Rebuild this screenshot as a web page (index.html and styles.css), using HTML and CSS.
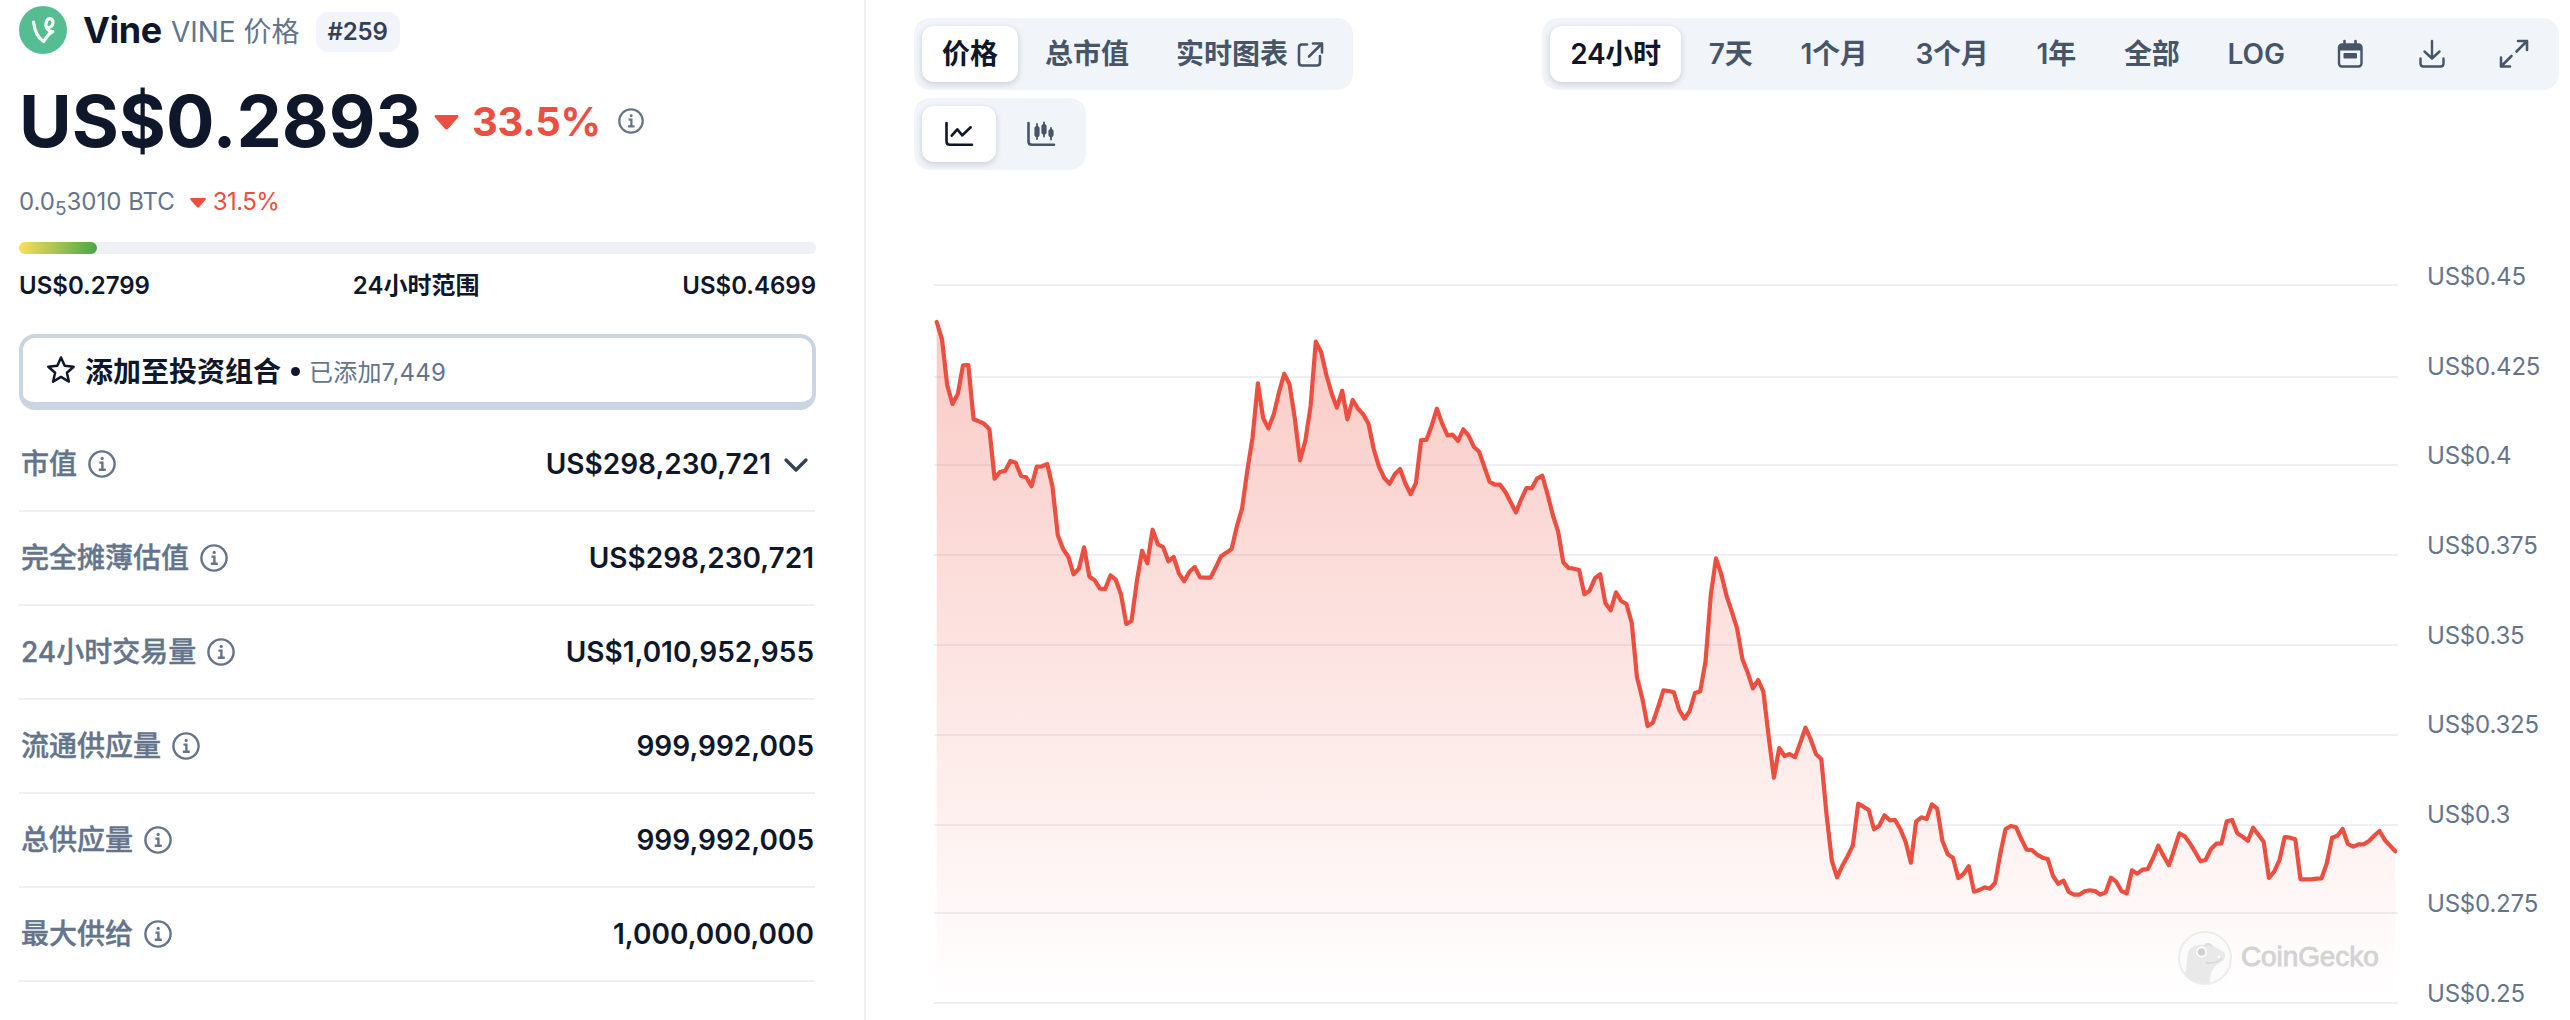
FILE: index.html
```html
<!DOCTYPE html>
<html lang="zh-CN">
<head>
<meta charset="utf-8">
<title>Vine VINE 价格</title>
<link rel="stylesheet" href="styles.css">
</head>
<body>
<svg class="defs" aria-hidden="true">
  <symbol id="info" viewBox="0 0 28 28"><circle cx="14" cy="14" r="12.6" fill="none" stroke="currentColor" stroke-width="2.4"/><circle cx="14.2" cy="8.4" r="1.6" fill="currentColor"/><path d="M11.4 12.6h3v7M10.8 19.8h7" fill="none" stroke="currentColor" stroke-width="2.4"/></symbol>
  <symbol id="down" viewBox="0 0 26 16"><path d="M2 0h22q3 0 1 3L15 14.500q-2 2-4 0L1 3q-2-3 1-3z" fill="currentColor"/></symbol>
</svg>
<div class="page">
  <aside class="side">
    <header class="coin">
      <svg class="logo" viewBox="0 0 48 48"><circle cx="24" cy="24" r="24" fill="#55bd92"/><path d="M14.500 16C15.500 24 19 32 24.500 35.500C28 32 28 28 34 25.500C29 25.500 25.500 21 27.500 15.500C29 11 34.500 12 34 17C33.500 20 31 21.500 29.500 21.500" fill="none" stroke="#f4fffc" stroke-width="3.200" stroke-linecap="round" stroke-linejoin="round"/></svg>
      <h1>Vine</h1>
      <span class="ticker">VINE 价格</span>
      <span class="rank">#259</span>
    </header>
    <div class="price">
      <span class="amount">US$0.2893</span>
      <svg class="tri-lg"><use href="#down"/></svg>
      <span class="change">33.5%</span>
      <svg class="info-sm"><use href="#info"/></svg>
    </div>
    <div class="btc">
      <span class="btc-amount">0.0<sub>5</sub>3010 BTC</span>
      <svg class="tri-sm"><use href="#down"/></svg>
      <span class="btc-change">31.5%</span>
    </div>
    <div class="range"><div class="range-fill"></div></div>
    <div class="range-labels"><span>US$0.2799</span><span>24小时范围</span><span>US$0.4699</span></div>
    <button class="portfolio">
      <svg class="star" viewBox="0 0 30 30"><path d="M15 2.500l3.700 8.300 9 .9-6.800 6 2 8.900-7.900-4.700-7.900 4.700 2-8.900-6.800-6 9-.9z" fill="none" stroke="currentColor" stroke-width="2.500" stroke-linejoin="round"/></svg>
      <b>添加至投资组合</b><i class="dot"></i><span>已添加7,449</span>
    </button>
    <dl class="stats">
      <div><dt>市值<svg><use href="#info"/></svg></dt><dd>US$298,230,721<svg class="chev" viewBox="0 0 32 28"><path d="M6 9l10 10 10-10" fill="none" stroke="currentColor" stroke-width="3.400" stroke-linecap="round" stroke-linejoin="round"/></svg></dd></div>
      <div><dt>完全摊薄估值<svg><use href="#info"/></svg></dt><dd>US$298,230,721</dd></div>
      <div><dt>24小时交易量<svg><use href="#info"/></svg></dt><dd>US$1,010,952,955</dd></div>
      <div><dt>流通供应量<svg><use href="#info"/></svg></dt><dd>999,992,005</dd></div>
      <div><dt>总供应量<svg><use href="#info"/></svg></dt><dd>999,992,005</dd></div>
      <div><dt>最大供给<svg><use href="#info"/></svg></dt><dd>1,000,000,000</dd></div>
    </dl>
  </aside>
  <main class="main">
    <div class="toolbar">
      <div class="toolbar-left">
        <div class="tabs metric">
          <button class="tab active">价格</button>
          <button class="tab">总市值</button>
          <button class="tab live">实时图表<svg class="icon" viewBox="0 0 28 28"><path d="M11 4.500H6Q3 4.500 3 7.500v15q0 3 3 3h15q3 0 3-3V16M17 3.500h9v9M26 3.500L13 16.500" fill="none" stroke="currentColor" stroke-width="2.600" stroke-linecap="round" stroke-linejoin="round"/></svg></button>
        </div>
        <div class="tabs">
          <button class="tab icon-tab active"><svg class="icon" viewBox="0 0 28 28"><path d="M1.500 3v18.500Q1.500 24.700 5 24.700h22M6.700 15.700l5.600-6.400 5 6L25.700 7.300" fill="none" stroke="currentColor" stroke-width="2.600" stroke-linecap="round" stroke-linejoin="round"/></svg></button>
          <button class="tab icon-tab"><svg class="icon" viewBox="0 0 28 28"><path d="M1.500 3v18.500Q1.500 24.700 5 24.700h22" fill="none" stroke="currentColor" stroke-width="2.600" stroke-linecap="round"/><path d="M10 4v15M17 2.500v14M24 8v11.500" fill="none" stroke="currentColor" stroke-width="1.800" stroke-linecap="round"/><path d="M10 8.500v6M17 6.500v5.500M24 11.500v3" fill="none" stroke="currentColor" stroke-width="5.200" stroke-linecap="round"/></svg></button>
        </div>
      </div>
      <div class="tabs period">
        <button class="tab active">24小时</button>
        <button class="tab">7天</button>
        <button class="tab">1个月</button>
        <button class="tab">3个月</button>
        <button class="tab">1年</button>
        <button class="tab">全部</button>
        <button class="tab log">LOG</button>
        <button class="tab icon-tab"><svg class="icon" viewBox="0 0 28 28"><path d="M8.500 1v5M19.500 1v5" stroke="currentColor" stroke-width="2.600" stroke-linecap="round"/><rect x="3" y="4.500" width="22.500" height="22" rx="3" fill="none" stroke="currentColor" stroke-width="2.400"/><path d="M3 5h22v5.500H3z" fill="currentColor"/><rect x="7.500" y="13" width="13.500" height="5.500" rx="1" fill="currentColor"/></svg></button>
        <button class="tab icon-tab"><svg class="icon" viewBox="0 0 28 28"><path d="M14 1v17.500M6.500 11.500l7.500 7 7.500-7M2.500 18.500v5q0 3 3 3h17q3 0 3-3v-5" fill="none" stroke="currentColor" stroke-width="2.400" stroke-linecap="round" stroke-linejoin="round"/></svg></button>
        <button class="tab icon-tab"><svg class="icon" viewBox="0 0 28 28"><path d="M18 1h9v9M27 1L16.500 11.500M1 17.500v9h9M1 26.500L11.500 16" fill="none" stroke="currentColor" stroke-width="2.600" stroke-linecap="round" stroke-linejoin="round"/></svg></button>
      </div>
    </div>
    <div class="chart">
      <svg class="plot" width="1464" height="760" viewBox="934 260 1464 760">
        <defs><linearGradient id="fade" gradientUnits="userSpaceOnUse" x1="0" y1="322" x2="0" y2="1000"><stop offset="0" stop-color="#ec4d3d" stop-opacity=".3"/><stop offset="1" stop-color="#ec4d3d" stop-opacity="0"/></linearGradient></defs>
        <path class="grid" d="M934 285h1464M934 377h1464M934 465h1464M934 555h1464M934 645h1464M934 735h1464M934 825h1464M934 913h1464M934 1003h1464"/>
        <path id="area" fill="url(#fade)"/>
        <path id="line" class="line"/>
      </svg>
      <div class="axis"><span>US$0.45</span><span>US$0.425</span><span>US$0.4</span><span>US$0.375</span><span>US$0.35</span><span>US$0.325</span><span>US$0.3</span><span>US$0.275</span><span>US$0.25</span></div>
      <div class="brand">
        <svg class="gecko" viewBox="0 0 54 54"><circle cx="27" cy="27" r="26" fill="#fbfbfb" stroke="#ececec" stroke-width="2"/><path d="M6.500 43C10 36 8 30 10 22C12 15 19 13 27 14C35 13.500 41 18 46.500 21.500C48.500 28 45 30 40 33C34 37 32 44 31.500 52C21 54 12 50 6.500 43z" fill="#e9e9e9"/><path d="M27 14q5-2.500 7 1.500" fill="none" stroke="#dcdcdc" stroke-width="2"/><path d="M28 31.500q9 2 16-4" fill="none" stroke="#d8d8d8" stroke-width="1.600"/><circle cx="23.500" cy="21" r="4.600" fill="#d0d0d0" stroke="#fff" stroke-width="1.600"/><circle cx="41" cy="26" r="1.200" fill="#fff"/></svg>
        <span>CoinGecko</span>
      </div>
    </div>
  </main>
</div>
<script src="chart.js"></script>
</body>
</html>
```
FILE: styles.css
```css
* { box-sizing: border-box; }
body { margin: 0; background: #fff; color: #0f172a; font-family: Inter, "Noto Sans CJK SC", sans-serif; }
button { border: 0; font: inherit; color: inherit; }
svg { display: block; flex: none; overflow: visible; }
.defs { position: absolute; width: 0; height: 0; }
.page { display: flex; width: 2570px; height: 1020px; overflow: hidden; }

.side { width: 866px; flex: none; padding: 6px 49px 0 19px; border-right: 2px solid #eff0f5; }
.coin { display: flex; align-items: center; height: 48px; white-space: nowrap; }
.logo { width: 48px; height: 48px; }
h1 { margin: 0 0 0 16px; font-size: 36px; line-height: 48px; font-weight: 700; letter-spacing: -.4px; }
.ticker { margin-left: 9px; font-size: 28px; line-height: 40px; color: #64748b; padding-top: 3px; }
.rank { margin: 4px 0 0 16px; height: 40px; padding: 0 12px; border-radius: 12px; background: #f1f5f9; color: #334155; font-size: 24px; line-height: 40px; font-weight: 600; letter-spacing: -.2px; }
.price { display: flex; align-items: center; height: 96px; margin-top: 19px; white-space: nowrap; color: #ec4e3f; }
.amount { color: #0f172a; font-size: 72px; line-height: 96px; font-weight: 700; }
.tri-lg { width: 25px; height: 15px; margin: 2px 1px 0 12px; }
.change { margin-left: 12px; font-size: 40px; font-weight: 700; letter-spacing: -.2px; }
.info-sm { width: 26px; height: 26px; margin-left: 17px; color: #64748b; }
.btc { display: flex; align-items: center; height: 40px; margin-top: 13px; font-size: 24px; line-height: 40px; color: #64748b; }
.btc sub { font-size: 19px; line-height: 0; vertical-align: -5px; }
.tri-sm { width: 16px; height: 10px; margin: 2px 7px 0 15px; color: #ec4e3f; }
.btc-change { color: #ec4e3f; letter-spacing: -.6px; }
.range { width: 797px; height: 12px; margin-top: 20px; border-radius: 6px; background: #eff0f5; }
.range-fill { width: 78px; height: 12px; border-radius: 6px; background: linear-gradient(90deg, #fbdf5a, #4aa64a); }
.range-labels { display: flex; justify-content: space-between; height: 40px; margin: 12px -1px 0 0; font-size: 24px; line-height: 40px; font-weight: 600; }
.portfolio { display: flex; align-items: center; width: 797px; height: 76px; margin-top: 28px; padding: 0 22px 0 23px; border: 4px solid #cbd5e1; border-bottom-width: 8px; border-radius: 16px; background: #fff; font-size: 24px; white-space: nowrap; }
.portfolio b { margin-left: 9px; font-size: 28px; }
.portfolio span { color: #64748b; letter-spacing: .2px; }
.star { width: 30px; height: 30px; }
.dot { width: 9px; height: 9px; margin: 2px 9px 0 10px; border-radius: 50%; background: #0f172a; }
.stats { margin: 8px 0 0; font-size: 28px; line-height: 40px; }
.stats > div { display: flex; align-items: center; justify-content: space-between; height: 94px; border-bottom: 2px solid #eff0f5; }
dt, dd { display: flex; align-items: center; margin: 0; }
dt { color: #64748b; font-weight: 500; padding-left: 2px; -webkit-text-stroke: .4px #64748b; }
dt svg { width: 28px; height: 28px; margin-left: 11px; }
dd { font-weight: 600; padding-right: 1px; }
.chev { width: 32px; height: 28px; margin: 2px 2px 0 9px; color: #334155; }

.main { flex: 1; padding: 18px 11px 0 48px; }
.toolbar { display: flex; justify-content: space-between; align-items: flex-start; height: 242px; }
.toolbar-left { display: grid; gap: 8px; justify-items: start; }
.tabs { display: flex; gap: 8px; height: 72px; padding: 8px; border-radius: 16px; background: #f1f5f9; }
.tab { display: flex; align-items: center; justify-content: center; gap: 7px; height: 56px; padding: 0 20px; border-radius: 12px; background: none; color: #475569; font-size: 28px; line-height: 40px; font-weight: 600; white-space: nowrap; }
.tab.active { background: #fff; color: #0f172a; box-shadow: 0 2px 6px rgba(15, 23, 42, .18); }
.metric { gap: 7px; }
.live { gap: 8px; }
.live .icon { margin-right: 1px; }
.period .tab { letter-spacing: -.25px; }
.period .log { letter-spacing: 0; }
.icon-tab { width: 74px; padding: 0; }
.icon { width: 28px; height: 28px; }

.chart { position: relative; display: flex; padding-left: 20px; }
.grid { fill: none; stroke: #eff0f5; stroke-width: 2; }
.line { fill: none; stroke: #ec4e3f; stroke-width: 4.2; stroke-linejoin: round; stroke-linecap: round; }
.axis { display: flex; flex-direction: column; justify-content: space-between; height: 749px; padding: 2px 0 0 29px; font-size: 24px; line-height: 30px; letter-spacing: -.2px; color: #64748b; white-space: nowrap; }
.brand { position: absolute; left: 1264px; top: 671px; display: flex; align-items: center; gap: 9px; color: #d3d3d3; font: 28px/54px "Liberation Sans", sans-serif; -webkit-text-stroke: .9px #d3d3d3; }
.brand span { margin-top: -2px; letter-spacing: -.1px; }
.gecko { width: 54px; height: 54px; }
```
FILE: chart.js
```js
const stretches = [
  [260, [186,238,376,432,402,316,315,478,484,491,508,656,636,632,603,608,647,652,679,620,619,612,680,826,867,890,943,926,862,950,961,986,987,946,959,1003,1092,1083,965,872,910,809,853,861,904,891,940,964,935,921,952,953,953,922,889,878,867,800,745,630,532,370,475,505,464,397,341,372,475,601,543,438,245,276,345,400,443]],
  [320, [212,298,240,266,283,311,388,440,474,491,463,447,490,522,490,360,360,317,266,311,346,344,363,328,346,380,395,440,485,494,494,516,547,577,538,504,505,476,467]],
  [440, [162,225,274,367,384,386,390,463,452,415,403,490,511,457,483,492,550,712,775,858,848,802,751,753,757,810,836,813,759,754,665,465,355,403,468,515,565,657,697,745,720,755,890,1013,924,948,942,952,908,863,899,943,957,1125,1263,1312,1277,1248,1216,1091,1100,1110,1168,1157,1126,1141,1140,1167,1205,1268,1145,1132,1137,1093,1106,1202,1243,1253,1314]],
  [720, [462,439,515,510,502,506,489,400,327,318,322,358,389,390,404,413,417,468,491,482,516,524,524,514,511,513,524,517,473,485,513,520,451,461,449,447,414,377,408,436,390,340,349,370,396,424,419,387,371,370,304,300,340,350,362,323,344,365,474,455,420,351,353,358,478,478,478,476,475,430,353,347,327,372,380,373,373,363,347,333,360,377,394]]
];
const ys = stretches.flatMap(([base, values]) => values.map(v => base + v / 3));
const left = 936.7;
const right = 2395.3;
const step = (right - left) / (ys.length - 1);
const path = 'M' + ys.map((y, i) => (left + i * step).toFixed(1) + ' ' + y.toFixed(1)).join('L');
document.getElementById('line').setAttribute('d', path);
document.getElementById('area').setAttribute('d', path + 'V1002H' + left + 'Z');
```
